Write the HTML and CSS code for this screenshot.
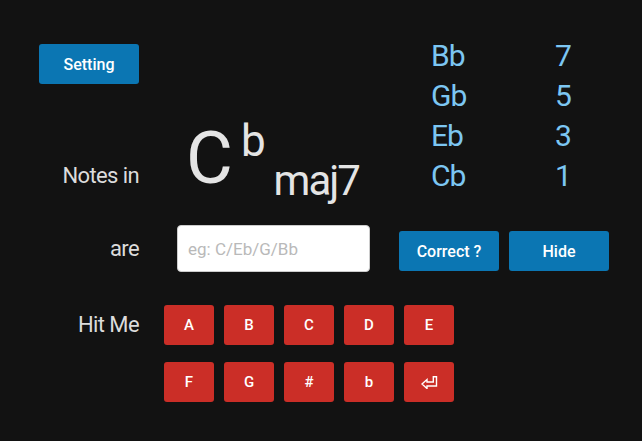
FILE: index.html
```html
<!DOCTYPE html>
<html lang="en">
<head>
<meta charset="utf-8">
<title>Chord Notes</title>
<link rel="stylesheet" href="styles.css">
</head>
<body>
<div class="page">
  <div class="top">
    <div class="left">
      <button class="btn btn-blue setting">Setting</button>
      <div class="chord-row">
        <div class="label">Notes in</div>
        <div class="chord"><span class="root">C</span><span class="acc">b</span><span class="qual">maj7</span></div>
      </div>
    </div>
    <div class="notes">
      <span>Bb</span><span>7</span>
      <span>Gb</span><span>5</span>
      <span>Eb</span><span>3</span>
      <span>Cb</span><span>1</span>
    </div>
  </div>
  <div class="answer-row">
    <div class="label">are</div>
    <input class="answer" type="text" placeholder="eg: C/Eb/G/Bb">
    <button class="btn btn-blue action correct">Correct ?</button>
    <button class="btn btn-blue action">Hide</button>
  </div>
  <div class="keys-row">
    <div class="label key-label">Hit Me</div>
    <div class="keys">
      <button class="btn key">A</button>
      <button class="btn key">B</button>
      <button class="btn key">C</button>
      <button class="btn key">D</button>
      <button class="btn key">E</button>
      <button class="btn key">F</button>
      <button class="btn key">G</button>
      <button class="btn key">#</button>
      <button class="btn key">b</button>
      <button class="btn key enter" aria-label="Enter"><svg width="17" height="13" viewBox="0 0 17 13"><path d="M1 8 L6 3.5 L6 6 L12.3 6 L12.3 0.8 L15.5 0.8 L15.5 10 L6 10 L6 12.5 Z" fill="none" stroke="#fff" stroke-width="1.4" stroke-linejoin="miter"/></svg></button>
    </div>
  </div>
</div>
</body>
</html>
```
FILE: styles.css
```css
html, body {
  margin: 0;
  padding: 0;
  background: #121212;
}
body {
  font-family: "Roboto", "DejaVu Sans Condensed", sans-serif;
  color: #dedede;
}
.page {
  padding: 36px 0 0 39px;
}
.top {
  display: flex;
  align-items: flex-start;
}
.left {
  width: 392px;
  padding-top: 8px;
}
.btn {
  border: none;
  border-radius: 3px;
  color: #fff;
  font-family: inherit;
  font-weight: 500;
  font-size: 16px;
  padding: 0;
  cursor: pointer;
}
.btn-blue {
  background: #0b76b3;
}
.setting {
  display: block;
  width: 100px;
  height: 40px;
}
.label {
  width: 100px;
  text-align: right;
  font-size: 22px;
  letter-spacing: -0.6px;
  line-height: 22px;
  color: #dcdcdc;
}
.chord-row {
  display: flex;
  align-items: baseline;
  margin-top: 35px;
}
.chord {
  margin-left: 47px;
  font-size: 72px;
  line-height: 72px;
  color: #e4e4e4;
  white-space: nowrap;
}
.acc {
  font-size: 44px;
  line-height: 1;
  vertical-align: 27px;
  margin-left: 8px;
}
.qual {
  font-size: 42px;
  line-height: 1;
  vertical-align: -12px;
  margin-left: 8px;
  letter-spacing: -2px;
}
.notes {
  display: grid;
  grid-template-columns: 124px auto;
  font-size: 30px;
  line-height: 40px;
  letter-spacing: -1px;
  color: #7cc6f2;
}
.answer-row {
  display: flex;
  align-items: center;
  margin-top: 23px;
}
.answer {
  box-sizing: border-box;
  width: 193px;
  height: 47px;
  margin-left: 38px;
  border: 1px solid #ccc;
  border-radius: 4px;
  background: #fff;
  padding: 0 0 0 10px;
  font-family: inherit;
  font-size: 17px;
  color: #333;
  outline: none;
}
.answer::placeholder {
  color: #b9b9b9;
}
.action {
  width: 100px;
  height: 40px;
  margin-top: 5px;
}
.correct {
  margin-left: 29px;
  margin-right: 10px;
}
.keys-row {
  display: flex;
  align-items: flex-start;
  margin-top: 33px;
}
.key-label {
  line-height: 40px;
}
.keys {
  display: grid;
  grid-template-columns: repeat(5, 50px);
  column-gap: 10px;
  row-gap: 17px;
  margin-left: 25px;
}
.key {
  height: 40px;
  background: #cb2e27;
  font-size: 15px;
}
.enter {
  display: flex;
  align-items: center;
  justify-content: center;
}
```
